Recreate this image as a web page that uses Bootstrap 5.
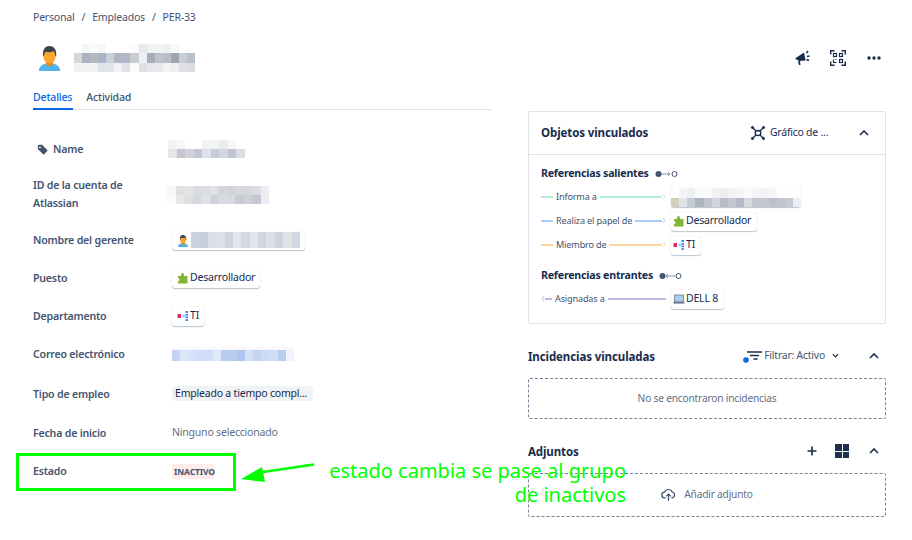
<!DOCTYPE html>
<html lang="es">
<head>
<meta charset="utf-8">
<title>PER-33</title>
<link href="https://cdn.jsdelivr.net/npm/bootstrap@5.3.0/dist/css/bootstrap.min.css" rel="stylesheet">
<style>
html,body{height:540px;overflow:hidden}
body{background:#fff;color:#172b4d;font-family:"Noto Sans",sans-serif;font-size:10.5px;letter-spacing:-.2px;position:relative}
.pg{width:912px;height:540px;padding:0 26px 0 33px;overflow:hidden}
.crumbs{height:35px;margin:0;align-items:center;--bs-breadcrumb-divider:'/';--bs-breadcrumb-margin-bottom:0;color:#44546f;font-size:10.5px}
.crumbs .breadcrumb-item,.crumbs .breadcrumb-item::before{color:#44546f}
.crumbs .breadcrumb-item+.breadcrumb-item{padding-left:7px}
.crumbs .breadcrumb-item+.breadcrumb-item::before{padding-right:7px}
.crumbs a{color:#44546f;text-decoration:none}
.hdr{height:45px;align-items:center}
.hdr-icons{gap:20px;margin-right:4px}
.avatar-big{margin:0 13px 0 5px}
.tabs-x{width:459px;height:30px;border-bottom:1px solid #dfe1e6}
.tabs-x a{color:#44546f;font-weight:500;text-decoration:none;font-size:10.6px;height:30px;display:flex;align-items:center;margin-right:13px;padding-top:8px;border-bottom:2px solid transparent}
.tabs-x a.on{color:#0c66e4;border-bottom-color:#0c66e4;padding-right:1px}
.cols{gap:36px}
.leftc{width:459px;flex:none;padding-top:20px}
.fr{display:flex;align-items:center;height:38px}
.fr.tall{height:53px}
.fr.wide{height:41px}
.lb{width:139px;flex:none;font-weight:600;font-size:10.6px;color:#44546f;line-height:18px}
.lb-two{margin-top:-2px}
.lb-ic{gap:5px}
.tag-ic{margin-left:4px}
.blur-name{margin-left:-4px}
.blur-id{margin-left:-5px}
.blur-mgr{margin-left:1px}
.muted-v{color:#626f86}
.chip{display:inline-flex;align-items:center;gap:1px;background:#fff;border-radius:3px;box-shadow:0 1px 1px rgba(9,30,66,.25),0 0 1px rgba(9,30,66,.2);height:19px;padding:0 5px;color:#172b4d;white-space:nowrap}
.chip-r{padding:0 6px 0 2px}
.chip-blur{padding:0;height:20px}
.pill-g{background:#f1f2f4;border-radius:3px;padding:0 3px;height:15px;line-height:15px;width:141px;display:block;white-space:nowrap;overflow:hidden}
.loz{background:#ffeceb;color:#44546f;font-weight:700;font-size:8.5px;letter-spacing:-.1px;border-radius:3px;padding:0 2px;height:15px;line-height:15px;display:block;width:43px;white-space:nowrap}
.rightc{width:358px;flex:none}
.pnl{border:1px solid #dfe1e6;border-radius:2px;height:213px;margin-top:1px}
.pnl-h{height:43px;border-bottom:1px solid #dfe1e6;padding:0 16px 0 12px;align-items:center}
.pnl-b{padding:8px 12px 0}
.ttl{font-weight:700;font-size:11.5px;letter-spacing:-.1px;color:#172b4d}
.ref-t{font-weight:700;font-size:10.6px;color:#172b4d;height:22px;align-items:center;gap:6px}
.ref-t2{margin-top:8px}
.ref-r{height:24px;align-items:center}
.conn{width:125px;flex:none;margin-right:5px;display:flex;align-items:center;color:var(--lc)}
.c-g{--lc:#b3eed9}.c-b{--lc:#a6cdfb}.c-o{--lc:#fdd5a0}.c-p{--lc:#c0b6e2}
.ref-lbl{font-size:9.1px;letter-spacing:-.15px;color:#44546f;padding:0 3px;white-space:nowrap}
.lnk{height:2px;background:var(--lc);flex:1 1 0}
.lnk-s{flex:0 0 12px}
.lnk-xs{flex:0 0 7px}
.sec-h{height:28px;align-items:center;padding-right:7px;margin-top:18px}
.sec-t{padding-top:2px}
.dash{border:1px dashed #738496;border-radius:2px;color:#626f86;font-size:10.2px;display:flex;align-items:center;justify-content:center;margin-top:8px}
.d1{height:41px}.d2{height:44px;gap:8px}
.mini{font-size:10.4px;color:#44546f;white-space:nowrap}
.mini-dark{color:#172b4d;width:78px;margin-left:4px}
.m-f{margin-left:2px}
.ch-top{margin-left:11px}
.ch-down{margin-left:7px}
.ch-up1{margin-left:30px}
.ch-up2{margin-left:20px}
.grid-sq{width:14px;height:14px;display:grid;grid-template-columns:1fr 1fr;gap:1px;margin-left:18px}
.grid-sq i{background:#1d2f4f;display:block}
.markbox{position:absolute;left:16px;top:453px;width:220px;height:38px;border:3px solid #00ff00;pointer-events:none}
.markarrow{position:absolute;left:238px;top:460px}
.note{position:absolute;right:286px;top:459px;color:#00ff00;font-size:20px;letter-spacing:0;line-height:24px;text-align:right;white-space:nowrap}
svg{display:block;flex:none}
</style>
</head>
<body>
<div class="pg">
  <nav aria-label="breadcrumb"><ol class="breadcrumb crumbs"><li class="breadcrumb-item"><a href="#">Personal</a></li><li class="breadcrumb-item"><a href="#">Empleados</a></li><li class="breadcrumb-item"><a href="#">PER-33</a></li></ol></nav>
  <div class="d-flex hdr justify-content-between">
    <div class="d-flex align-items-center">
      <svg class="avatar-big" width="23" height="27" viewBox="0 0 24 28"><path d="M1 28c0-5 4-7 8-8h6c4 1 8 3 8 8z" fill="#4fb3ee"/><path d="M8.5 18h7v3.500c-2 2-5 2-7 0z" fill="#e98c10"/><ellipse cx="12" cy="12.500" rx="6.500" ry="7.500" fill="#fba62f"/><path d="M5.300 13C4.500 5 8 2 12 2s7.800 3 7 11l-1-.5c0-3-1-4.500-2-5-3 1.500-6 1-8 .5-1 1-2 3-2 4.500z" fill="#3d4249"/></svg>
      <svg width="121" height="28" viewBox="0 0 15 3" preserveAspectRatio="none" shape-rendering="crispEdges" aria-hidden="true"><g><rect x="1" width="1" height="1" fill="#f5f6f7"/><rect x="2" width="1" height="1" fill="#fcfbfa"/><rect x="3" width="1" height="1" fill="#f6f7f9"/><rect x="7" width="1" height="1" fill="#fbfbfb"/><rect x="8" width="1" height="1" fill="#e9eaee"/><rect x="9" width="1" height="1" fill="#f2f3f5"/><rect x="10" width="1" height="1" fill="#f2f3f4"/><rect x="11" width="1" height="1" fill="#eeeff2"/><rect x="12" width="1" height="1" fill="#f8f9fa"/></g><g transform="translate(0 1)"><rect width="1" height="1" fill="#d6d5d7"/><rect x="1" width="1" height="1" fill="#a9b3c4"/><rect x="2" width="1" height="1" fill="#b8b8c0"/><rect x="3" width="1" height="1" fill="#a9b4c8"/><rect x="4" width="1" height="1" fill="#c9d2d9"/><rect x="5" width="1" height="1" fill="#b5b6c2"/><rect x="6" width="1" height="1" fill="#aeb8c8"/><rect x="7" width="1" height="1" fill="#cbccd2"/><rect x="8" width="1" height="1" fill="#edf0f2"/><rect x="9" width="1" height="1" fill="#a9adbb"/><rect x="10" width="1" height="1" fill="#bcc1cc"/><rect x="11" width="1" height="1" fill="#babcc6"/><rect x="12" width="1" height="1" fill="#9da4b5"/><rect x="13" width="1" height="1" fill="#c9ced7"/><rect x="14" width="1" height="1" fill="#b9c0cd"/></g><g transform="translate(0 2)"><rect width="1" height="1" fill="#f1f2f3"/><rect x="1" width="1" height="1" fill="#f2f2f4"/><rect x="2" width="1" height="1" fill="#f2f3f4"/><rect x="3" width="1" height="1" fill="#e1e3e8"/><rect x="4" width="1" height="1" fill="#e1e4e8"/><rect x="5" width="1" height="1" fill="#f3f3f5"/><rect x="6" width="1" height="1" fill="#e0e3ea"/><rect x="7" width="1" height="1" fill="#fafafa"/><rect x="8" width="1" height="1" fill="#dee0e5"/><rect x="9" width="1" height="1" fill="#e6e7ea"/><rect x="10" width="1" height="1" fill="#e6e8ec"/><rect x="11" width="1" height="1" fill="#f2f3f5"/><rect x="12" width="1" height="1" fill="#eeeef0"/><rect x="13" width="1" height="1" fill="#dfe0e6"/><rect x="14" width="1" height="1" fill="#dcdee4"/></g></svg>
    </div>
    <div class="d-flex align-items-center hdr-icons">
      <svg width="16" height="16" viewBox="0 0 16 16"><path d="M1 8.500 10 2.500l1.500 8L5 11z" fill="#172b4d"/><path d="M4 11.500l1 3.500h1.500L6 11z" fill="#172b4d"/><path d="M12.500 3l1.500-2M13 6.500l2.500-.5M12.500 9.500l2.500 1" stroke="#172b4d" stroke-width="1.500"/></svg>
      <svg width="16" height="16" viewBox="0 0 16 16" fill="none" stroke="#172b4d" stroke-width="1.200"><path d="M.6 4.500V.6h3.900M11.500.6h3.900v3.900M15.400 11.500v3.900h-3.900M4.500 15.400H.6v-3.900" stroke-width="1.600"/><rect x="3.500" y="3.500" width="3" height="3"/><rect x="9.500" y="3.500" width="3" height="3"/><rect x="9.500" y="9.500" width="3" height="3"/><path d="M3.500 9.500v3h3M6.500 9.500h-1"/></svg>
      <svg width="16" height="16" viewBox="0 0 16 16" fill="#172b4d"><circle cx="3" cy="8" r="1.700"/><circle cx="8" cy="8" r="1.700"/><circle cx="13" cy="8" r="1.700"/></svg>
    </div>
  </div>
  <div class="d-flex tabs-x"><a href="#" class="on">Detalles</a><a href="#">Actividad</a></div>
  <div class="d-flex cols">
    <div class="leftc">
      <div class="fr"><div class="lb lb-ic d-flex align-items-center"><svg class="tag-ic" width="11" height="11" viewBox="0 0 13 13"><path d="M1 2.500A1.500 1.500 0 0 1 2.500 1H6l6 6.200a1 1 0 0 1 0 1.400L8.600 12a1 1 0 0 1-1.400 0L1 5.800zM3.500 3a1 1 0 1 0 0 2 1 1 0 0 0 0-2z" fill="#44546f" fill-rule="evenodd"/></svg><span>Name</span></div>
        <svg class="blur-name" width="77" height="18" viewBox="0 0 9 2" preserveAspectRatio="none" shape-rendering="crispEdges" aria-hidden="true"><rect width="1" height="1" fill="#f2f2f3"/><rect x="1" width="1" height="1" fill="#f6f7f8"/><rect x="4" width="1" height="1" fill="#f3f3f5"/><rect x="5" width="1" height="1" fill="#f3f4f5"/><rect x="6" width="1" height="1" fill="#eaebee"/><rect x="7" width="1" height="1" fill="#f7f7f9"/><g transform="translate(0 1)"><rect width="1" height="1" fill="#e6e6e9"/><rect x="1" width="1" height="1" fill="#c6c7d3"/><rect x="2" width="1" height="1" fill="#d0d3dc"/><rect x="3" width="1" height="1" fill="#c5c7d3"/><rect x="4" width="1" height="1" fill="#dde1e9"/><rect x="5" width="1" height="1" fill="#c8cad6"/><rect x="6" width="1" height="1" fill="#d3d6e0"/><rect x="7" width="1" height="1" fill="#c1c3cf"/><rect x="8" width="1" height="1" fill="#dcdee3"/></g></svg></div>
      <div class="fr tall"><div class="lb lb-two">ID de la cuenta de<br>Atlassian</div>
        <svg class="blur-id" width="102" height="18" viewBox="0 0 12 2" preserveAspectRatio="none" shape-rendering="crispEdges" aria-hidden="true"><rect width="1" height="1" fill="#f7f7f7"/><rect x="1" width="1" height="1" fill="#dfe0e0"/><rect x="2" width="1" height="1" fill="#e3e4e5"/><rect x="3" width="1" height="1" fill="#dcdde0"/><rect x="4" width="1" height="1" fill="#dbdcdf"/><rect x="5" width="1" height="1" fill="#dfe1e4"/><rect x="6" width="1" height="1" fill="#d4d6db"/><rect x="7" width="1" height="1" fill="#d0d2d8"/><rect x="8" width="1" height="1" fill="#d6d8dc"/><rect x="9" width="1" height="1" fill="#d5d7dc"/><rect x="10" width="1" height="1" fill="#dadde0"/><rect x="11" width="1" height="1" fill="#ecedf1"/><g transform="translate(0 1)"><rect width="1" height="1" fill="#fafafa"/><rect x="1" width="1" height="1" fill="#e7e7e9"/><rect x="2" width="1" height="1" fill="#dedfe2"/><rect x="3" width="1" height="1" fill="#d4d7dd"/><rect x="4" width="1" height="1" fill="#dfe1e5"/><rect x="5" width="1" height="1" fill="#ced1d9"/><rect x="6" width="1" height="1" fill="#d8dadf"/><rect x="7" width="1" height="1" fill="#d5d8dd"/><rect x="8" width="1" height="1" fill="#c8cbd4"/><rect x="9" width="1" height="1" fill="#ced0d8"/><rect x="10" width="1" height="1" fill="#c4c6d2"/><rect x="11" width="1" height="1" fill="#ecedf1"/></g></svg></div>
      <div class="fr"><div class="lb">Nombre del gerente</div>
        <span class="chip">
          <svg width="12" height="13" viewBox="0 0 24 28"><path d="M1 28c0-5 4-7 8-8h6c4 1 8 3 8 8z" fill="#4fb3ee"/><path d="M8.500 18h7v3.500c-2 2-5 2-7 0z" fill="#e98c10"/><ellipse cx="12" cy="12.500" rx="6.500" ry="7.500" fill="#fba62f"/><path d="M5.300 13C4.500 5 8 2 12 2s7.800 3 7 11l-1-.5c0-3-1-4.500-2-5-3 1.500-6 1-8 .5-1 1-2 3-2 4.500z" fill="#3d4249"/></svg>
          <svg class="blur-mgr" width="109" height="16" viewBox="0 0 13 1" preserveAspectRatio="none" shape-rendering="crispEdges" aria-hidden="true"><rect width="1" height="1" fill="#cdd2df"/><rect x="1" width="1" height="1" fill="#c8cedb"/><rect x="2" width="1" height="1" fill="#d9dfe7"/><rect x="3" width="1" height="1" fill="#dce1e8"/><rect x="4" width="1" height="1" fill="#cdd3df"/><rect x="5" width="1" height="1" fill="#e2e5ea"/><rect x="6" width="1" height="1" fill="#d3d8e2"/><rect x="7" width="1" height="1" fill="#e2e5ea"/><rect x="8" width="1" height="1" fill="#d0d5e0"/><rect x="9" width="1" height="1" fill="#dde0e7"/><rect x="10" width="1" height="1" fill="#d0d4de"/><rect x="11" width="1" height="1" fill="#e0e2e8"/><rect x="12" width="1" height="1" fill="#d3d7e2"/></svg>
        </span></div>
      <div class="fr"><div class="lb">Puesto</div><span class="chip"><svg width="12" height="12" viewBox="0 0 12 12"><path d="M1 4h3V2.500a1.500 1.500 0 0 1 3 0V4h3.500v7.500H1V9a1.500 1.500 0 0 0 0-3z" fill="#82b536"/></svg>Desarrollador</span></div>
      <div class="fr"><div class="lb">Departamento</div><span class="chip"><svg width="12" height="12" viewBox="0 0 12 12"><rect x="0.500" y="4" width="3.500" height="4" fill="#e5286b"/><rect x="5.500" y="4.500" width="2.500" height="3" fill="#9ccbf6"/><g fill="#2f8cf0"><rect x="8.500" y="1" width="2.500" height="2"/><rect x="8.500" y="4" width="2.500" height="1.700"/><rect x="8.500" y="6.500" width="2.500" height="1.700"/><rect x="8.500" y="9.200" width="2.500" height="1.800"/></g></svg>TI</span></div>
      <div class="fr"><div class="lb">Correo electrónico</div>
        <svg width="122" height="14" viewBox="0 0 15 5" preserveAspectRatio="none" shape-rendering="crispEdges" aria-hidden="true"><rect width="15" height="1" fill="#f7f9fe"/><g transform="translate(0 1) scale(1 4)"><rect width="1" height="1" fill="#c2d4f2"/><rect x="1" width="1" height="1" fill="#dbe6f8"/><rect x="2" width="1" height="1" fill="#d5e1f7"/><rect x="3" width="1" height="1" fill="#cfddf6"/><rect x="4" width="1" height="1" fill="#cfddf6"/><rect x="5" width="1" height="1" fill="#e0e9fa"/><rect x="6" width="1" height="1" fill="#b8ccf0"/><rect x="7" width="1" height="1" fill="#b8ccf0"/><rect x="8" width="1" height="1" fill="#aec5ef"/><rect x="9" width="1" height="1" fill="#d3e0f6"/><rect x="10" width="1" height="1" fill="#c3d4f3"/><rect x="11" width="1" height="1" fill="#ccdbf5"/><rect x="12" width="1" height="1" fill="#cfddf6"/><rect x="13" width="1" height="1" fill="#b9cdf0"/><rect x="14" width="1" height="1" fill="#eff4fd"/></g></svg></div>
      <div class="fr wide"><div class="lb">Tipo de empleo</div><span class="pill-g">Empleado a tiempo compl...</span></div>
      <div class="fr"><div class="lb">Fecha de inicio</div><span class="muted-v">Ninguno seleccionado</span></div>
      <div class="fr"><div class="lb">Estado</div><span class="loz">INACTIVO</span></div>
    </div>
    <div class="rightc">
      <div class="pnl">
        <div class="d-flex pnl-h justify-content-between"><span class="ttl">Objetos vinculados</span>
          <div class="d-flex align-items-center">
            <svg width="16" height="16" viewBox="0 0 16 16" fill="#172b4d" stroke="#172b4d"><path d="M3 3l3 3M13 3l-3 3M3 13l3-3M13 13l-3-3" stroke-width="1.400" fill="none"/><ellipse cx="8" cy="8" rx="2.800" ry="2.500" fill="none" stroke-width="1.300"/><circle cx="2.500" cy="2.500" r="1.100"/><circle cx="13.500" cy="2.500" r="1.100"/><circle cx="2.500" cy="13.500" r="1.100"/><circle cx="13.500" cy="13.500" r="1.100"/></svg>
            <span class="mini mini-dark">Gráfico de ...</span>
            <svg class="ch-top" width="10" height="6" viewBox="0 0 10 6" fill="none" stroke="#172b4d" stroke-width="1.600"><path d="M1 5l4-4 4 4"/></svg>
          </div>
        </div>
        <div class="pnl-b">
          <div class="d-flex ref-t"><span>Referencias salientes</span><svg width="24" height="8" viewBox="0 0 24 8" fill="none"><circle cx="3.500" cy="4" r="3" fill="#44546f"/><path d="M6 4h9M13 2l2 2-2 2" stroke="#8590a2"/><circle cx="19.500" cy="4" r="2.500" stroke="#44546f"/></svg></div>
          <div class="d-flex ref-r"><div class="conn c-g"><span class="lnk lnk-s"></span><span class="ref-lbl">Informa a</span><span class="lnk"></span><svg width="4" height="7" viewBox="0 0 4 7" fill="none" stroke="currentColor"><path d="M1 1l2 2.500-2 2.500"/></svg></div>
            <span class="chip chip-blur"><svg width="130" height="19" viewBox="0 0 16 2" preserveAspectRatio="none" shape-rendering="crispEdges" aria-hidden="true"><rect x="1" width="1" height="1" fill="#f4f4f4"/><rect x="2" width="1" height="1" fill="#eff0f1"/><rect x="3" width="1" height="1" fill="#fafbfb"/><rect x="4" width="1" height="1" fill="#fafafa"/><rect x="5" width="1" height="1" fill="#f1f1f3"/><rect x="6" width="1" height="1" fill="#ededef"/><rect x="7" width="1" height="1" fill="#f1f2f4"/><rect x="8" width="1" height="1" fill="#f6f6f8"/><rect x="9" width="1" height="1" fill="#fafafb"/><rect x="10" width="1" height="1" fill="#f4f4f6"/><rect x="11" width="1" height="1" fill="#f2f2f4"/><rect x="12" width="1" height="1" fill="#f5f6f7"/><g transform="translate(0 1)"><rect width="1" height="1" fill="#d1d0b9"/><rect x="1" width="1" height="1" fill="#e0e4e7"/><rect x="2" width="1" height="1" fill="#c3cad2"/><rect x="3" width="1" height="1" fill="#aeb5c2"/><rect x="4" width="1" height="1" fill="#c1c4ce"/><rect x="5" width="1" height="1" fill="#d2d5dc"/><rect x="6" width="1" height="1" fill="#b8bcc6"/><rect x="7" width="1" height="1" fill="#c3c8d1"/><rect x="8" width="1" height="1" fill="#b5bbc6"/><rect x="9" width="1" height="1" fill="#d7d9df"/><rect x="10" width="1" height="1" fill="#c3c7d0"/><rect x="11" width="1" height="1" fill="#c4c8d1"/><rect x="12" width="1" height="1" fill="#bcc1cb"/><rect x="13" width="1" height="1" fill="#bfc4cd"/><rect x="14" width="1" height="1" fill="#c6cad2"/><rect x="15" width="1" height="1" fill="#edf0f3"/></g></svg></span></div>
          <div class="d-flex ref-r"><div class="conn c-b"><span class="lnk lnk-s"></span><span class="ref-lbl">Realiza el papel de</span><span class="lnk"></span><svg width="4" height="7" viewBox="0 0 4 7" fill="none" stroke="currentColor"><path d="M1 1l2 2.500-2 2.500"/></svg></div>
            <span class="chip chip-r"><svg width="12" height="12" viewBox="0 0 12 12"><path d="M1 4h3V2.500a1.500 1.500 0 0 1 3 0V4h3.500v7.500H1V9a1.500 1.500 0 0 0 0-3z" fill="#82b536"/></svg>Desarrollador</span></div>
          <div class="d-flex ref-r"><div class="conn c-o"><span class="lnk lnk-s"></span><span class="ref-lbl">Miembro de</span><span class="lnk"></span><svg width="4" height="7" viewBox="0 0 4 7" fill="none" stroke="currentColor"><path d="M1 1l2 2.500-2 2.500"/></svg></div>
            <span class="chip chip-r"><svg width="12" height="12" viewBox="0 0 12 12"><rect x="0.500" y="4" width="3.500" height="4" fill="#e5286b"/><rect x="5.500" y="4.500" width="2.500" height="3" fill="#9ccbf6"/><g fill="#2f8cf0"><rect x="8.500" y="1" width="2.500" height="2"/><rect x="8.500" y="4" width="2.500" height="1.700"/><rect x="8.500" y="6.500" width="2.500" height="1.700"/><rect x="8.500" y="9.200" width="2.500" height="1.800"/></g></svg>TI</span></div>
          <div class="d-flex ref-t ref-t2"><span>Referencias entrantes</span><svg width="24" height="8" viewBox="0 0 24 8" fill="none"><circle cx="3.500" cy="4" r="3" fill="#44546f"/><path d="M9 2 7 4l2 2M7 4h9" stroke="#8590a2"/><circle cx="19.500" cy="4" r="2.500" stroke="#44546f"/></svg></div>
          <div class="d-flex ref-r"><div class="conn c-p"><svg width="4" height="7" viewBox="0 0 4 7" fill="none" stroke="currentColor"><path d="M3 1 1 3.500 3 6"/></svg><span class="lnk lnk-xs"></span><span class="ref-lbl">Asignadas a</span><span class="lnk"></span></div>
            <span class="chip chip-r"><svg width="12" height="12" viewBox="0 0 12 12"><rect x="1.500" y="2" width="9" height="6.800" fill="#a9cfe8" stroke="#6b7a8f" stroke-width=".8"/><rect x="0.500" y="9" width="11" height="1.600" fill="#6b7a8f"/></svg>DELL 8</span></div>
        </div>
      </div>
      <div class="d-flex sec-h justify-content-between"><span class="ttl sec-t">Incidencias vinculadas</span>
        <div class="d-flex align-items-center">
          <svg width="19" height="14" viewBox="0 0 19 14"><path d="M4 3h15M7 6.500h9M10.500 10h4" stroke="#172b4d" stroke-width="1.500"/><circle cx="3" cy="11" r="2.800" fill="#0c66e4"/></svg>
          <span class="mini m-f">Filtrar: Activo</span>
          <svg class="ch-down" width="7" height="5" viewBox="0 0 8 5" fill="none" stroke="#172b4d" stroke-width="1.400"><path d="M1 1l3 3 3-3"/></svg>
          <svg class="ch-up1" width="10" height="6" viewBox="0 0 10 6" fill="none" stroke="#172b4d" stroke-width="1.600"><path d="M1 5l4-4 4 4"/></svg>
        </div>
      </div>
      <div class="dash d1">No se encontraron incidencias</div>
      <div class="d-flex sec-h justify-content-between"><span class="ttl sec-t">Adjuntos</span>
        <div class="d-flex align-items-center">
          <svg width="10" height="10" viewBox="0 0 10 10" stroke="#172b4d" stroke-width="1.600"><path d="M5 .5v9M.5 5h9"/></svg>
          <span class="grid-sq"><i></i><i></i><i></i><i></i></span>
          <svg class="ch-up2" width="10" height="6" viewBox="0 0 10 6" fill="none" stroke="#172b4d" stroke-width="1.600"><path d="M1 5l4-4 4 4"/></svg>
        </div>
      </div>
      <div class="dash d2"><svg width="15" height="14" viewBox="0 0 16 14" fill="none" stroke="#44546f" stroke-width="1.300"><path d="M5 10H4a3 3 0 0 1-.3-6A4.500 4.500 0 0 1 12 3.800 3.200 3.200 0 0 1 12 10h-1"/><path d="M8 13.500V6.500M5.500 8.500 8 6l2.500 2.500"/></svg><span>Añadir adjunto</span></div>
    </div>
  </div>
</div>
<div class="markbox"></div>
<svg class="markarrow" width="80" height="24" viewBox="0 0 80 24"><path d="M76 4.500 25 12" stroke="#00ff00" stroke-width="2.500"/><path d="M3 19 24 7l3 15z" fill="#00ff00"/></svg>
<div class="note">estado cambia se pase al grupo<br>de inactivos</div>
</body>
</html>
